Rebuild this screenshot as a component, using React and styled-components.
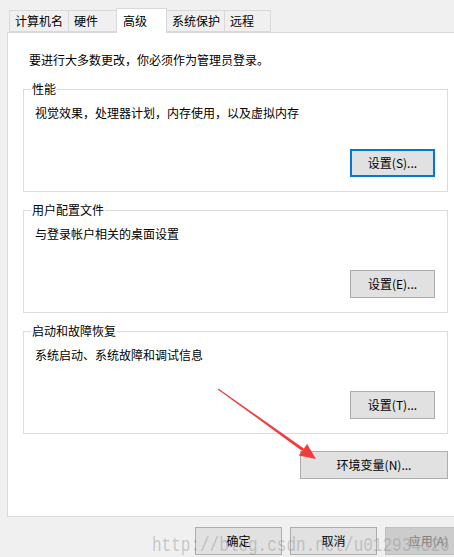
import React from "react";
import styled, { createGlobalStyle } from "styled-components";

const GlobalStyle = createGlobalStyle`
  html, body {
    margin: 0;
    padding: 0;
    background: #f0f0f0;
  }
  body {
    font-family: "Noto Sans CJK SC", "Noto Sans", sans-serif;
    font-size: 12px;
    color: #000;
  }
`;

const Window = styled.div`
  position: relative;
  width: 454px;
  height: 557px;
  overflow: hidden;
  background: #f0f0f0;
`;

const TabStrip = styled.div`
  display: flex;
  align-items: flex-end;
  height: 32px;
  padding-left: 9px;
  box-sizing: border-box;
`;

const Tab = styled.div`
  position: relative;
  box-sizing: border-box;
  display: flex;
  align-items: center;
  width: ${p => p.$w}px;
  height: ${p => (p.$active ? 25 : 22)}px;
  padding-left: ${p => (p.$active ? 6 : 5)}px;
  margin-left: ${p => (p.$first ? 0 : p.$active ? -3 : -1)}px;
  margin-bottom: ${p => (p.$active ? -1 : 0)}px;
  border: 1px solid #d9d9d9;
  border-bottom: ${p => (p.$active ? "none" : "1px solid #d9d9d9")};
  background: ${p => (p.$active ? "#fff" : "#f0f0f0")};
  z-index: ${p => (p.$active ? 2 : 1)};
  white-space: nowrap;
  line-height: 16px;
`;

const Panel = styled.div`
  box-sizing: border-box;
  width: 470px;
  height: 485px;
  margin-left: 7px;
  padding: 19px 0 0 15px;
  border: 1px solid #d9d9d9;
  background: #fff;
`;

const Intro = styled.div`
  margin-left: 6px;
  line-height: 16px;
`;

const Groups = styled.div`
  display: flex;
  flex-direction: column;
  gap: 10px;
  width: 425px;
  margin-top: 13px;
`;

const Group = styled.fieldset`
  margin: 0;
  min-width: 0;
  padding: 0 12px 14px 11px;
  border: 1px solid #dcdcdc;
`;

const Legend = styled.legend`
  margin-left: -4px;
  padding: 0 1px;
  line-height: 16px;
`;

const Desc = styled.div`
  margin-top: 8px;
  line-height: 16px;
`;

const ButtonRow = styled.div`
  display: flex;
  justify-content: flex-end;
  margin-top: ${p => p.$top || 0}px;
  padding-right: ${p => p.$right || 0}px;
`;

const Button = styled.button`
  box-sizing: border-box;
  width: ${p => p.$w || 85}px;
  height: 28px;
  padding: 0;
  font-family: inherit;
  font-size: 12px;
  line-height: 16px;
  color: ${p => (p.disabled ? "#838383" : "#000")};
  background: ${p => (p.disabled ? "#cccccc" : "#e1e1e1")};
  border: ${p =>
    p.$focused
      ? "2px solid #0078d7"
      : p.disabled
      ? "1px solid #bfbfbf"
      : "1px solid #adadad"};
  flex-shrink: 0;
`;

const Footer = styled.div`
  display: flex;
  gap: 8px;
  margin-top: 10px;
  padding-left: 195px;
`;

const Watermark = styled.div`
  position: absolute;
  left: 152px;
  top: 536px;
  font-family: "Liberation Mono", monospace;
  font-size: 16px;
  line-height: 16px;
  white-space: nowrap;
  color: rgba(140, 140, 140, 0.42);
  transform: scaleY(1.25);
  transform-origin: 0 0;
  pointer-events: none;
`;

const Arrow = styled.svg`
  position: absolute;
  left: 212px;
  top: 384px;
  pointer-events: none;
`;

const tabs = [
  { label: "计算机名", w: 60 },
  { label: "硬件", w: 51 },
  { label: "高级", w: 51, active: true },
  { label: "系统保护", w: 59 },
  { label: "远程", w: 47 }
];

const groups = [
  {
    title: "性能",
    desc: "视觉效果，处理器计划，内存使用，以及虚拟内存",
    button: "设置(S)...",
    focused: true
  },
  {
    title: "用户配置文件",
    desc: "与登录帐户相关的桌面设置",
    button: "设置(E)..."
  },
  {
    title: "启动和故障恢复",
    desc: "系统启动、系统故障和调试信息",
    button: "设置(T)..."
  }
];

export default function App() {
  return (
    <Window>
      <GlobalStyle />
      <TabStrip>
        {tabs.map((t, i) => (
          <Tab key={t.label} $w={t.w} $active={t.active} $first={i === 0}>
            {t.label}
          </Tab>
        ))}
      </TabStrip>
      <Panel>
        <Intro>要进行大多数更改，你必须作为管理员登录。</Intro>
        <Groups>
          {groups.map(g => (
            <Group key={g.title}>
              <Legend>{g.title}</Legend>
              <Desc>{g.desc}</Desc>
              <ButtonRow $top={28}>
                <Button $focused={g.focused}>{g.button}</Button>
              </ButtonRow>
            </Group>
          ))}
        </Groups>
        <ButtonRow $top={17} $right={1} style={{ width: 425 }}>
          <Button $w={148}>环境变量(N)...</Button>
        </ButtonRow>
      </Panel>
      <Footer>
        <Button $w={87}>确定</Button>
        <Button $w={87}>取消</Button>
        <Button $w={87} disabled>
          应用(A)
        </Button>
      </Footer>
      <Watermark>http://blog.csdn.net/u012934526</Watermark>
      <Arrow width="110" height="80" viewBox="0 0 110 80">
        <polygon
          points="5.7,5.4 6.3,4.6 91.9,64.5 90.1,66.9"
          fill="#f43a3a"
        />
        <polygon points="104,75 86.9,71.4 95.1,60" fill="#f43a3a" />
      </Arrow>
    </Window>
  );
}
